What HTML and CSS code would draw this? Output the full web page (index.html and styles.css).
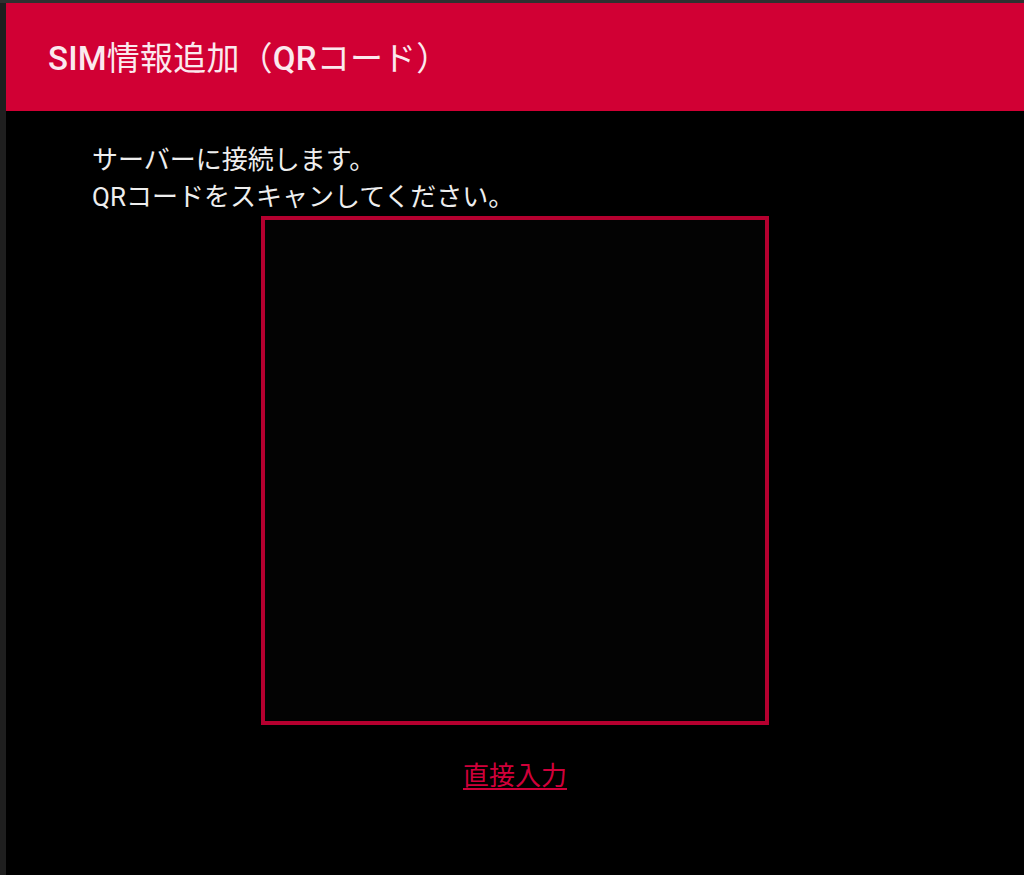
FILE: index.html
```html
<!DOCTYPE html>
<html lang="ja">
<head>
<meta charset="utf-8">
<title>SIM情報追加（QRコード）</title>
<link rel="stylesheet" href="styles.css">
</head>
<body>
<div class="panel">
  <header class="app-bar">
    <h1 class="title"><span class="latin">SIM</span>情報追加（<span class="latin">QR</span>コード）</h1>
  </header>
  <main class="content">
    <p class="message">サーバーに接続します。<br>QRコードをスキャンしてください。</p>
    <div class="scanner"></div>
    <a class="direct-link" href="#">直接入力</a>
  </main>
</div>
</body>
</html>
```
FILE: styles.css
```css
html, body {
  margin: 0;
  padding: 0;
}
body {
  background: #1f1f1f;
  border-top: 3px solid #303030;
  padding-left: 6px;
  height: 872px;
  overflow: hidden;
  font-family: Roboto, "Noto Sans CJK JP", sans-serif;
}
.panel {
  background: #000;
  height: 872px;
  display: flex;
  flex-direction: column;
}
.app-bar {
  background: #d10034;
  height: 108px;
  display: flex;
  align-items: center;
  padding-left: 42px;
  padding-top: 2px;
  box-sizing: border-box;
  flex-shrink: 0;
}
.title {
  margin: 0;
  color: #fbe9ee;
  font-size: 33px;
  font-weight: 400;
  letter-spacing: 0.2px;
  line-height: 1;
}
.latin {
  font-weight: 500;
}
.content {
  display: flex;
  flex-direction: column;
  align-items: center;
  padding-top: 31px;
}
.message {
  align-self: stretch;
  margin: 0;
  padding-left: 86px;
  color: #eeeeee;
  font-size: 26px;
  line-height: 37px;
}
.scanner {
  width: 500px;
  height: 501px;
  border: 4px solid #b5002f;
  background: #030303;
}
.direct-link {
  margin-top: 33px;
  color: #d0003a;
  font-size: 26px;
  line-height: 37px;
  text-decoration: underline;
  text-underline-offset: 3px;
}
```
